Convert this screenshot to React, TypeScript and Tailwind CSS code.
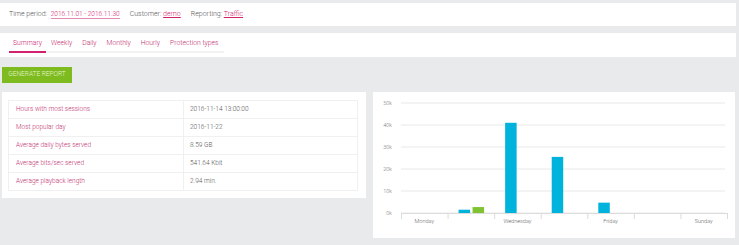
import React from 'react';

const rows = [
  ['Hours with most sessions', '2016-11-14 13:00:00'],
  ['Most popular day', '2016-11-22'],
  ['Average daily bytes served', '8.59 GB'],
  ['Average bits/sec served', '541.64 Kbit'],
  ['Average playback length', '2.94 min.'],
];

const tabs = ['Summary', 'Weekly', 'Daily', 'Monthly', 'Hourly', 'Protection types'];

const days = ['Monday', 'Tuesday', 'Wednesday', 'Thursday', 'Friday', 'Saturday', 'Sunday'];
// [blue, green] in thousands
const values: [number, number][] = [
  [0, 0],
  [1.5, 2.7],
  [41, 0],
  [25.5, 0],
  [4.7, 0],
  [0, 0],
  [0, 0],
];

function Chart() {
  const left = 28;
  const right = 354;
  const top = 11;
  const bottom = 121;
  const w = (right - left) / 7;
  const y = (v: number) => bottom - (v / 50) * (bottom - top);
  return (
    <svg width="362" height="146" className="block">
      {[0, 10, 20, 30, 40, 50].map((v) => (
        <g key={v}>
          <line x1={left} x2={right - 2} y1={y(v)} y2={y(v)} stroke="#e8e8e8" strokeWidth="1" />
          <text x={left - 9} y={y(v) + 2} fontSize="5.5" fill="#777" textAnchor="end">
            {v}k
          </text>
        </g>
      ))}
      <line x1={left} x2={right} y1={bottom + 0.5} y2={bottom + 0.5} stroke="#dcdcdc" />
      {days.map((d, i) => (
        <g key={d}>
          <line x1={left + i * w + 0.5} x2={left + i * w + 0.5} y1={bottom} y2={bottom + 6} stroke="#dcdcdc" />
          {i % 2 === 0 && (
            <text x={left + i * w + w / 2} y={bottom + 10} fontSize="5.5" fill="#666" textAnchor="middle">
              {d}
            </text>
          )}
          {values[i][0] > 0 && (
            <rect x={left + i * w + 11} y={y(values[i][0])} width="11.5" height={bottom - y(values[i][0])} fill="#00b3dc" />
          )}
          {values[i][1] > 0 && (
            <rect x={left + i * w + 25} y={y(values[i][1])} width="11.5" height={bottom - y(values[i][1])} fill="#80c232" />
          )}
        </g>
      ))}
      <line x1={right + 0.5} x2={right + 0.5} y1={bottom} y2={bottom + 6} stroke="#dcdcdc" />
    </svg>
  );
}

export default function App() {
  return (
    <div className="w-[739px] h-[245px] bg-[#e9eaec] pt-[3px] font-['Roboto',sans-serif] font-light text-[7px] text-[#555] overflow-hidden">
      <div className="mr-[3px] h-[23px] bg-white flex items-center pl-[9px] gap-[10px]">
        <span>
          Time period:{' '}
          <span className="ml-[2px] text-[6.5px] text-[#d1216e] border-b border-[#e58ab2]">2016.11.01 - 2016.11.30</span>
        </span>
        <span>
          Customer: <span className="text-[#d1216e] underline">demo</span>
        </span>
        <span>
          Reporting: <span className="text-[#d1216e] underline">Traffic</span>
        </span>
      </div>

      <div className="mt-[7px] mr-[3px] h-[24px] bg-white flex items-end pl-[9px] pb-[4px] text-[6.8px]">
        {tabs.map((t, i) => (
          <div
            key={t}
            className={
              i === 0
                ? 'px-[4px] pb-[3px] border-b-2 border-[#d1216e] text-[#d1216e]'
                : 'px-[5px] pb-[3px] border-b-2 border-[#f2f2f2] text-[#c2306e]'
            }
          >
            {t}
          </div>
        ))}
      </div>

      <button className="mt-[10px] ml-[2px] h-[16px] w-[70px] bg-[#7dbb1f] text-[#e8f5d4] text-[6.5px] uppercase">
        Generate report
      </button>

      <div className="mt-[9px] flex items-start">
        <div className="ml-[2px] w-[364px] bg-white pt-[8px] pb-[7px] px-[6px] text-[6.5px]">
          <table className="w-[350px] border-collapse">
            <tbody>
              {rows.map(([k, v]) => (
                <tr key={k} className="h-[18px]">
                  <td className="w-[175px] border border-[#f0f0f0] pl-[7px] text-[#c2306e]">{k}</td>
                  <td className="border border-[#f0f0f0] pl-[6px] text-[#555]">{v}</td>
                </tr>
              ))}
            </tbody>
          </table>
        </div>
        <div className="ml-[7px] w-[362px] h-[146px] bg-white">
          <Chart />
        </div>
      </div>
    </div>
  );
}
